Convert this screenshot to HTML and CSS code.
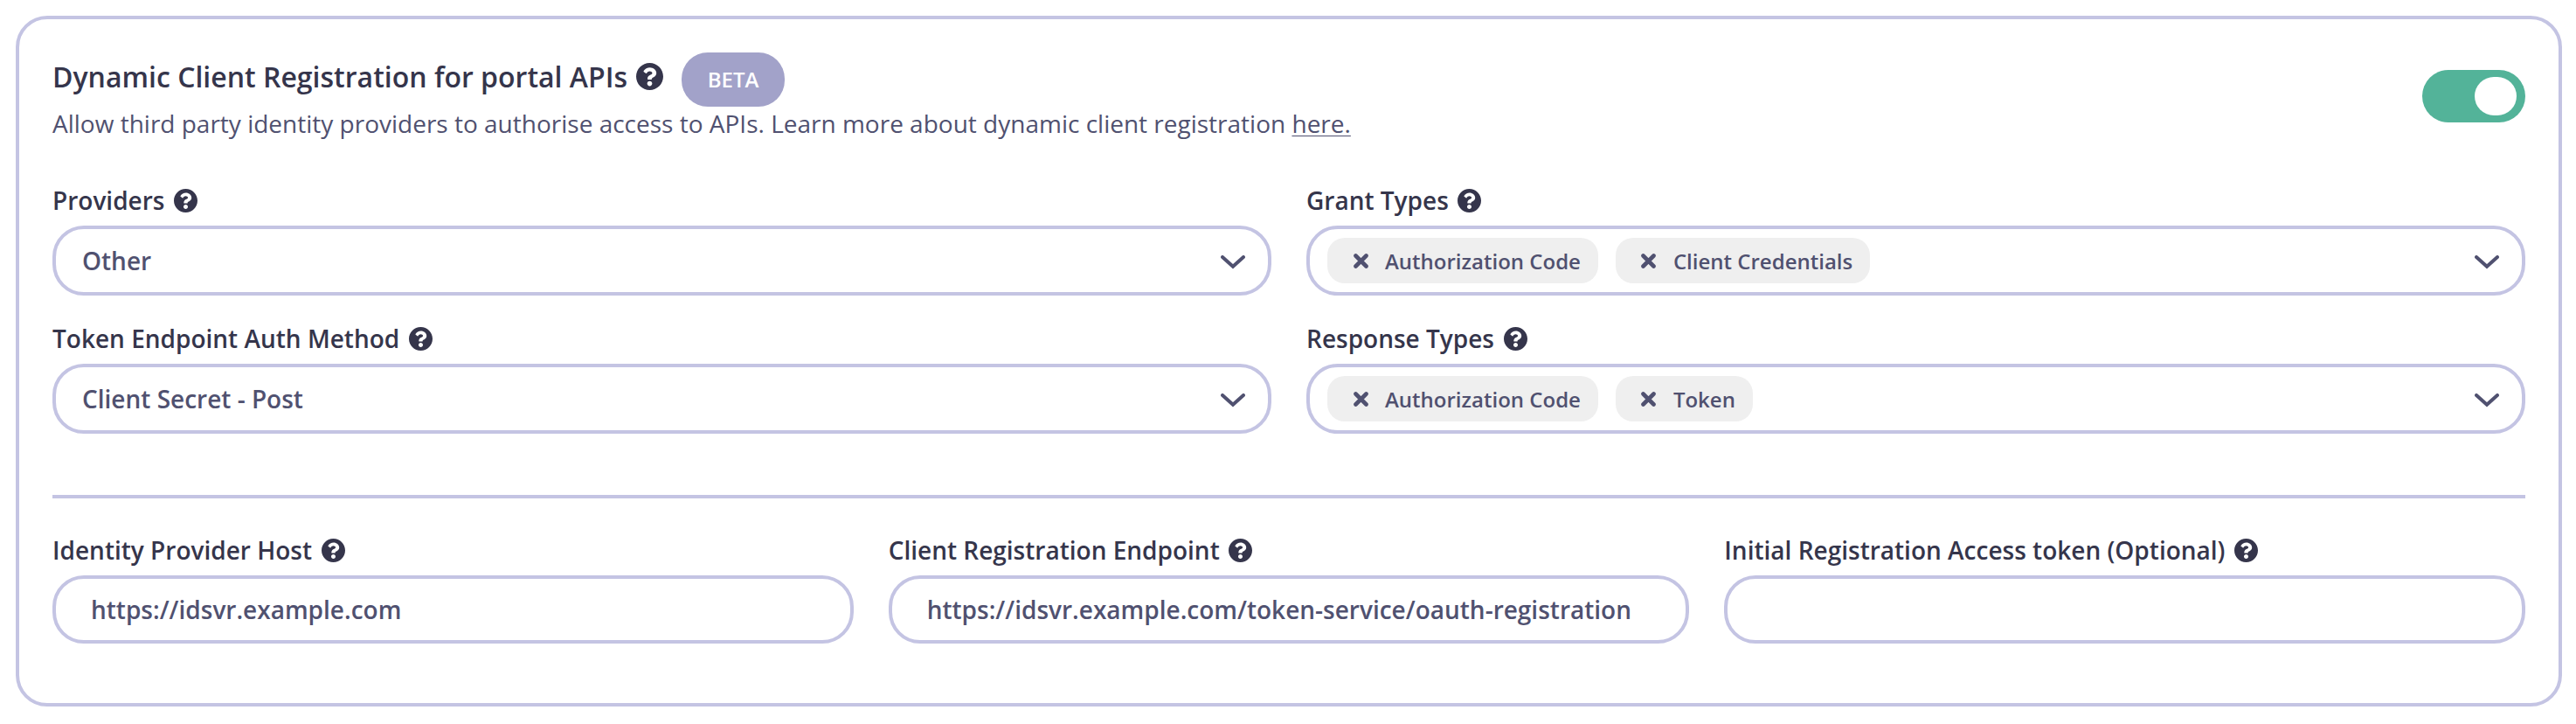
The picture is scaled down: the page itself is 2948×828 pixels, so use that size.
FILE: index.html
```html
<!DOCTYPE html>
<html lang="en">
<head>
<meta charset="utf-8">
<title>Dynamic Client Registration</title>
<link rel="stylesheet" href="styles.css">
</head>
<body>
<svg class="sprite" aria-hidden="true">
  <symbol id="help" viewBox="8 8 496 496"><path d="M504 256c0 137-111 248-248 248S8 393 8 256C8 119 119 8 256 8s248 111 248 248zM262.700 90c-54.500 0-89.300 23-116.500 63.800-3.500 5.300-2.400 12.400 2.700 16.300l34.700 26.300c5.200 3.900 12.600 3 16.700-2.100 17.900-22.700 30.100-35.800 57.300-35.800 20.400 0 45.700 13.100 45.700 33 0 15-12.400 22.700-32.500 34C247.100 238.500 216 254.900 216 296v4c0 6.600 5.400 12 12 12h56c6.600 0 12-5.400 12-12v-1.300c0-28.500 83.200-29.600 83.200-106.700 0-58-60.200-102-116.500-102zM256 338c-25.400 0-46 20.600-46 46s20.600 46 46 46 46-20.600 46-46-20.600-46-46-46z"/></symbol>
  <symbol id="chevron" viewBox="0 0 28 16"><path d="M2 2 14 12.800 26 2" fill="none" stroke="currentColor" stroke-width="4" stroke-linecap="round"/></symbol>
  <symbol id="cross" viewBox="0 0 17 17"><path d="M2.500 2.500 14.500 14.500M14.500 2.500 2.500 14.500" fill="none" stroke="currentColor" stroke-width="4.600" stroke-linecap="round"/></symbol>
</svg>
<main class="card">
  <header class="header">
    <div>
      <div class="title-row">
        <h1 class="title">Dynamic Client Registration for portal APIs</h1>
        <svg class="help help-lg"><use href="#help"/></svg>
        <span class="badge">BETA</span>
      </div>
      <p class="description">Allow third party identity providers to authorise access to APIs. Learn more about dynamic client registration <a class="link" href="#">here.</a></p>
    </div>
    <button class="toggle" type="button" role="switch" aria-checked="true" aria-label="Dynamic Client Registration"><span class="knob"></span></button>
  </header>

  <section class="grid two">
    <div class="field">
      <div class="label">Providers<svg class="help"><use href="#help"/></svg></div>
      <div class="select"><span class="value">Other</span><svg class="chevron"><use href="#chevron"/></svg></div>
    </div>
    <div class="field">
      <div class="label">Grant Types<svg class="help"><use href="#help"/></svg></div>
      <div class="select multi">
        <div class="tags">
          <span class="tag"><svg class="cross"><use href="#cross"/></svg>Authorization Code</span>
          <span class="tag"><svg class="cross"><use href="#cross"/></svg>Client Credentials</span>
        </div>
        <svg class="chevron"><use href="#chevron"/></svg>
      </div>
    </div>
    <div class="field">
      <div class="label">Token Endpoint Auth Method<svg class="help"><use href="#help"/></svg></div>
      <div class="select"><span class="value">Client Secret - Post</span><svg class="chevron"><use href="#chevron"/></svg></div>
    </div>
    <div class="field">
      <div class="label">Response Types<svg class="help"><use href="#help"/></svg></div>
      <div class="select multi">
        <div class="tags">
          <span class="tag"><svg class="cross"><use href="#cross"/></svg>Authorization Code</span>
          <span class="tag"><svg class="cross"><use href="#cross"/></svg>Token</span>
        </div>
        <svg class="chevron"><use href="#chevron"/></svg>
      </div>
    </div>
  </section>

  <hr class="divider">

  <section class="grid three">
    <div class="field">
      <div class="label">Identity Provider Host<svg class="help"><use href="#help"/></svg></div>
      <input class="input" type="text" value="https://idsvr.example.com" aria-label="Identity Provider Host">
    </div>
    <div class="field">
      <div class="label">Client Registration Endpoint<svg class="help"><use href="#help"/></svg></div>
      <input class="input" type="text" value="https://idsvr.example.com/token-service/oauth-registration" aria-label="Client Registration Endpoint">
    </div>
    <div class="field">
      <div class="label">Initial Registration Access token (Optional)<svg class="help"><use href="#help"/></svg></div>
      <input class="input" type="text" value="" aria-label="Initial Registration Access token">
    </div>
  </section>
</main>
</body>
</html>
```
FILE: styles.css
```css
:root {
  --line: #c4c4e3;
  --heading: #35354b;
  --text: #505170;
}

* { box-sizing: border-box; }

body {
  margin: 0;
  padding: 18px 16px 20px 18px;
  background: #fff;
  color: var(--text);
  font-family: "Open Sans", "Noto Sans", sans-serif;
  font-size: 28px;
}

.sprite { display: none; }

.card {
  height: 790px;
  padding: 38px;
  border: 4px solid var(--line);
  border-radius: 36px;
}

.header {
  display: flex;
  align-items: center;
  justify-content: space-between;
  height: 100px;
  margin-bottom: 51px;
}

.title-row {
  display: flex;
  align-items: flex-start;
  height: 62px;
}

.title {
  margin: 0;
  color: var(--heading);
  font-size: 32px;
  font-weight: 600;
  line-height: 56px;
}

.help {
  width: 27px;
  height: 27px;
  margin-left: 10.5px;
  color: var(--heading);
  fill: currentColor;
}

.help-lg {
  width: 31px;
  height: 31px;
  margin-top: 12px;
  margin-left: 10px;
}

.badge {
  width: 118px;
  height: 62px;
  margin-left: 21px;
  border-radius: 30px;
  background: #a2a2c9;
  color: #fff;
  font-size: 24px;
  font-weight: 600;
  line-height: 62px;
  text-align: center;
}

.description {
  margin: 0;
  line-height: 38px;
}

.link {
  color: inherit;
  text-decoration: underline;
  text-decoration-thickness: 1px;
  text-underline-offset: 3px;
  text-decoration-skip-ink: none;
}

.toggle {
  display: flex;
  align-items: center;
  justify-content: flex-end;
  width: 118px;
  height: 60px;
  padding: 0 10px;
  border: 0;
  border-radius: 30px;
  background: #53b399;
}

.knob {
  width: 48px;
  height: 44px;
  border-radius: 22px;
  background: #fff;
}

.grid { display: grid; column-gap: 40px; row-gap: 31px; }
.two { grid-template-columns: repeat(2, 1fr); }
.three { grid-template-columns: repeat(3, 1fr); }

.label {
  display: flex;
  align-items: center;
  height: 36px;
  margin-bottom: 11px;
  color: var(--heading);
  font-weight: 600;
  line-height: 36px;
}

.select {
  display: flex;
  align-items: center;
  justify-content: space-between;
  height: 80px;
  padding: 0 26px 0 30px;
  border: 4px solid var(--line);
  border-radius: 36px;
  font-weight: 600;
}

.multi { padding-left: 20px; }

.chevron {
  width: 28px;
  height: 16px;
  margin-top: 4px;
}

.tags { display: flex; gap: 20px; }

.tag {
  display: flex;
  align-items: center;
  height: 52px;
  padding: 0 20px 0 29.5px;
  border-radius: 20px;
  background: #efefef;
  font-size: 24px;
}

.cross {
  width: 17px;
  height: 17px;
  margin-right: 19.5px;
}

.divider {
  height: 4px;
  margin: 70px 0 41px;
  border: 0;
  background: var(--line);
}

.input {
  display: block;
  width: 100%;
  height: 78px;
  padding: 0 40px;
  border: 4px solid var(--line);
  border-radius: 36px;
  outline: 0;
  background: #fff;
  color: var(--text);
  font: inherit;
  font-weight: 600;
}
```
